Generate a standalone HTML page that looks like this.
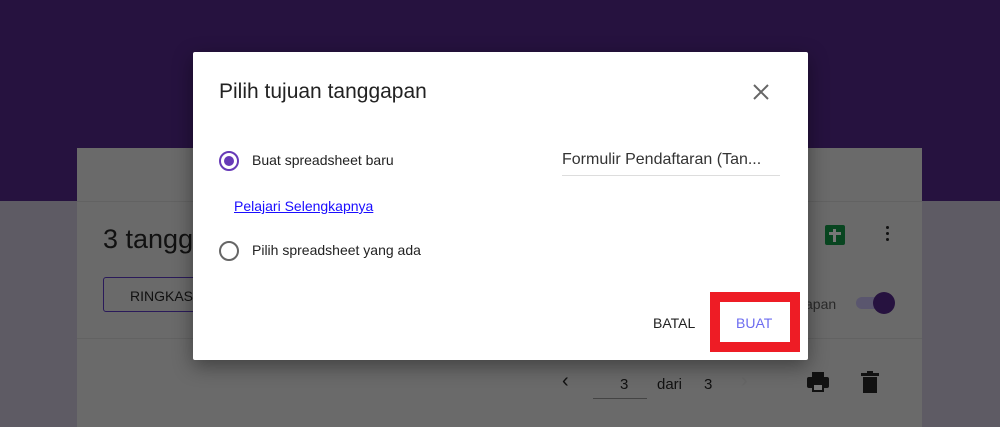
<!DOCTYPE html>
<html><head><style>
body{margin:0;width:1000px;height:427px;overflow:hidden;position:relative;font-family:"Liberation Sans",Arial,sans-serif;background:#5e5b64}
.abs{position:absolute}
</style></head><body>
<div class="abs" style="left:0;top:0;width:1000px;height:201px;background:#26123f"></div>
<div class="abs" style="left:77px;top:148px;width:845px;height:279px;background:#6a6a6a"></div>
<div class="abs" style="left:77px;top:201px;width:845px;height:1px;background:#626262"></div>
<div class="abs" style="left:77px;top:338px;width:845px;height:1px;background:#626262"></div>
<div class="abs" style="left:103px;top:224px;font-size:27px;color:#111">3 tangg</div>
<div class="abs" style="left:103px;top:277px;width:120px;height:35px;border:1px solid #2a1a5a;border-radius:3px;box-sizing:border-box;font-size:14px;color:#111;padding:10px 0 0 26px">RINGKAS</div>
<div class="abs" style="left:805px;top:296px;font-size:14px;color:#2a2a2a">apan</div>
<div class="abs" style="left:856px;top:297px;width:30px;height:12px;border-radius:6px;background:#5a566e"></div>
<div class="abs" style="left:873px;top:292px;width:22px;height:22px;border-radius:50%;background:#26123f"></div>
<div class="abs" style="left:825px;top:225px;width:20px;height:20px;background:#084520;border-radius:2px"></div>
<div class="abs" style="left:833px;top:229px;width:3px;height:13px;background:#777"></div>
<div class="abs" style="left:829px;top:232px;width:12px;height:3px;background:#777"></div>
<div class="abs" style="left:886px;top:226px;width:3px;height:3px;border-radius:50%;background:#111;box-shadow:0 6px 0 #111,0 12px 0 #111"></div>
<div class="abs" style="left:562px;top:370px;font-size:20px;color:#111">‹</div>
<div class="abs" style="left:620px;top:376px;font-size:15px;color:#111">3</div>
<div class="abs" style="left:593px;top:398px;width:54px;height:1px;background:#444"></div>
<div class="abs" style="left:657px;top:376px;font-size:15px;color:#111">dari</div>
<div class="abs" style="left:704px;top:376px;font-size:15px;color:#111">3</div>
<div class="abs" style="left:741px;top:370px;font-size:20px;color:#666">›</div>
<svg class="abs" style="left:806px;top:371px" width="24" height="22" viewBox="0 0 24 22"><rect x="6" y="1" width="12" height="5" fill="#111"/><rect x="1" y="6" width="22" height="11" rx="2" fill="#111"/><rect x="6" y="13" width="12" height="8" fill="#111"/><rect x="8" y="14" width="8" height="5" fill="#777"/></svg>
<svg class="abs" style="left:861px;top:371px" width="18" height="22" viewBox="0 0 18 22"><rect x="0" y="2" width="18" height="3" fill="#111"/><rect x="6" y="0" width="6" height="3" fill="#111"/><rect x="2" y="6" width="14" height="16" fill="#111"/></svg>

<div class="abs" style="left:193px;top:52px;width:615px;height:308px;background:#fff;border-radius:2px;box-shadow:0 6px 20px rgba(0,0,0,.4)"></div>
<div class="abs" style="left:219px;top:80px;font-size:21px;color:#222">Pilih tujuan tanggapan</div>
<svg class="abs" style="left:752px;top:83px" width="18" height="18" viewBox="0 0 18 18"><path d="M2 2L16 16M16 2L2 16" stroke="#666" stroke-width="2"/></svg>
<div class="abs" style="left:219px;top:151px;width:16px;height:16px;border:2px solid #673ab7;border-radius:50%"></div>
<div class="abs" style="left:224px;top:156px;width:10px;height:10px;background:#673ab7;border-radius:50%"></div>
<div class="abs" style="left:252px;top:152px;font-size:14px;color:#222">Buat spreadsheet baru</div>
<div class="abs" style="left:562px;top:151px;font-size:16px;color:#333">Formulir Pendaftaran (Tan...</div>
<div class="abs" style="left:562px;top:175px;width:218px;height:1px;background:#ddd"></div>
<div class="abs" style="left:234px;top:198px;font-size:14px;color:#1a0dff;text-decoration:underline">Pelajari Selengkapnya</div>
<div class="abs" style="left:219px;top:241px;width:16px;height:16px;border:2px solid #666;border-radius:50%"></div>
<div class="abs" style="left:252px;top:242px;font-size:14px;color:#222">Pilih spreadsheet yang ada</div>
<div class="abs" style="left:653px;top:315px;font-size:14px;color:#222">BATAL</div>
<div class="abs" style="left:710px;top:292px;width:90px;height:60px;border:10px solid #ee1c25;box-sizing:border-box"></div>
<div class="abs" style="left:736px;top:315px;font-size:14px;color:#6d6cf0">BUAT</div>
</body></html>
